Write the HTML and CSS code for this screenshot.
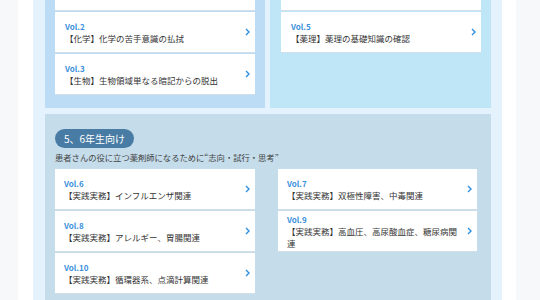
FILE: index.html
```html
<!DOCTYPE html>
<html lang="ja">
<head>
<meta charset="utf-8">
<link rel="stylesheet" href="styles.css">
</head>
<body>
<div class="page">
  <div class="panel">
    <div class="toprow">
      <div class="sec sec-a">
        <a class="card"></a>
        <a class="card"><div class="txt"><span class="vol">Vol.2</span><span class="ttl">【化学】化学の苦手意識の払拭</span></div><svg class="chev" viewBox="0 0 5 8"><path d="M1 1l3 3-3 3" /></svg></a>
        <a class="card"><div class="txt"><span class="vol">Vol.3</span><span class="ttl">【生物】生物領域単なる暗記からの脱出</span></div><svg class="chev" viewBox="0 0 5 8"><path d="M1 1l3 3-3 3" /></svg></a>
      </div>
      <div class="sec sec-b">
        <a class="card"></a>
        <a class="card"><div class="txt"><span class="vol">Vol.5</span><span class="ttl">【薬理】薬理の基礎知識の確認</span></div><svg class="chev" viewBox="0 0 5 8"><path d="M1 1l3 3-3 3" /></svg></a>
      </div>
    </div>
    <div class="sec sec-c">
      <div class="pill">5、6年生向け</div>
      <p class="sub">患者さんの役に立つ薬剤師になるために“志向・試行・思考”</p>
      <div class="grid">
        <div class="col">
          <a class="card"><div class="txt"><span class="vol">Vol.6</span><span class="ttl">【実践実務】インフルエンザ関連</span></div><svg class="chev" viewBox="0 0 5 8"><path d="M1 1l3 3-3 3" /></svg></a>
          <a class="card"><div class="txt"><span class="vol">Vol.8</span><span class="ttl">【実践実務】アレルギー、胃腸関連</span></div><svg class="chev" viewBox="0 0 5 8"><path d="M1 1l3 3-3 3" /></svg></a>
          <a class="card"><div class="txt"><span class="vol">Vol.10</span><span class="ttl">【実践実務】循環器系、点滴計算関連</span></div><svg class="chev" viewBox="0 0 5 8"><path d="M1 1l3 3-3 3" /></svg></a>
        </div>
        <div class="col">
          <a class="card"><div class="txt"><span class="vol">Vol.7</span><span class="ttl">【実践実務】双極性障害、中毒関連</span></div><svg class="chev" viewBox="0 0 5 8"><path d="M1 1l3 3-3 3" /></svg></a>
          <a class="card"><div class="txt"><span class="vol">Vol.9</span><span class="ttl">【実践実務】高血圧、高尿酸血症、糖尿病関連</span></div><svg class="chev" viewBox="0 0 5 8"><path d="M1 1l3 3-3 3" /></svg></a>
        </div>
      </div>
    </div>
  </div>
</div>
</body>
</html>
```
FILE: styles.css
```css
html, body {
  margin: 0;
  padding: 0;
}
body {
  background: #f7f8fa;
  height: 300px;
  overflow: hidden;
  font-family: "Noto Sans CJK JP", "Noto Sans", sans-serif;
  color: #333;
}
.page {
  margin-left: 18px;
  width: 469px;
  min-height: 300px;
  background: #fff;
  padding: 0 14px 0 15px;
}
.panel {
  background: #e3f2fd;
  padding: 0 11px 20px 12px;
  min-height: 330px;
}
.toprow {
  display: flex;
  gap: 5px;
  margin-top: -30px;
}
.sec-a {
  width: 200px;
  padding: 0 10px 12px 10px;
  background: #bbdcf4;
}
.sec-b {
  width: 200px;
  padding: 0 10px 12px 11px;
  background: #bee6f6;
}
.sec-c {
  margin-top: 6px;
  background: #c5dceb;
  padding: 10px 14px 20px 10px;
}
.card {
  position: relative;
  display: flex;
  flex-direction: column;
  justify-content: center;
  background: #fff;
  border-bottom: 1px solid #d3dee7;
  margin-bottom: 1px;
  padding: 0 14px 0 10px;
  text-decoration: none;
  box-sizing: border-box;
  min-height: 41px;
}
.sec-c .card {
  padding-left: 9px;
}
.txt {
  display: flex;
  flex-direction: column;
}
.vol {
  font-size: 8px;
  line-height: 11px;
  font-weight: 700;
  color: #3a8fdc;
}
.ttl {
  font-size: 8.5px;
  line-height: 12px;
  color: #333;
}
.chev {
  position: absolute;
  right: 5px;
  top: 50%;
  width: 5px;
  height: 8px;
  margin-top: -4px;
  fill: none;
  stroke: #2d8fe0;
  stroke-width: 1.4;
}
.pill {
  display: inline-block;
  background: #487ca5;
  color: #fff;
  font-size: 10px;
  line-height: 19px;
  height: 19px;
  padding: 0 9px;
  border-radius: 10px;
}
.sub {
  margin: 2px 0 0 0;
  font-size: 8.3px;
  line-height: 14px;
  color: #444;
  white-space: nowrap;
  height: 19px;
}
.grid {
  display: grid;
  grid-template-columns: 200px 199px;
  column-gap: 23px;
  align-items: start;
}
```
